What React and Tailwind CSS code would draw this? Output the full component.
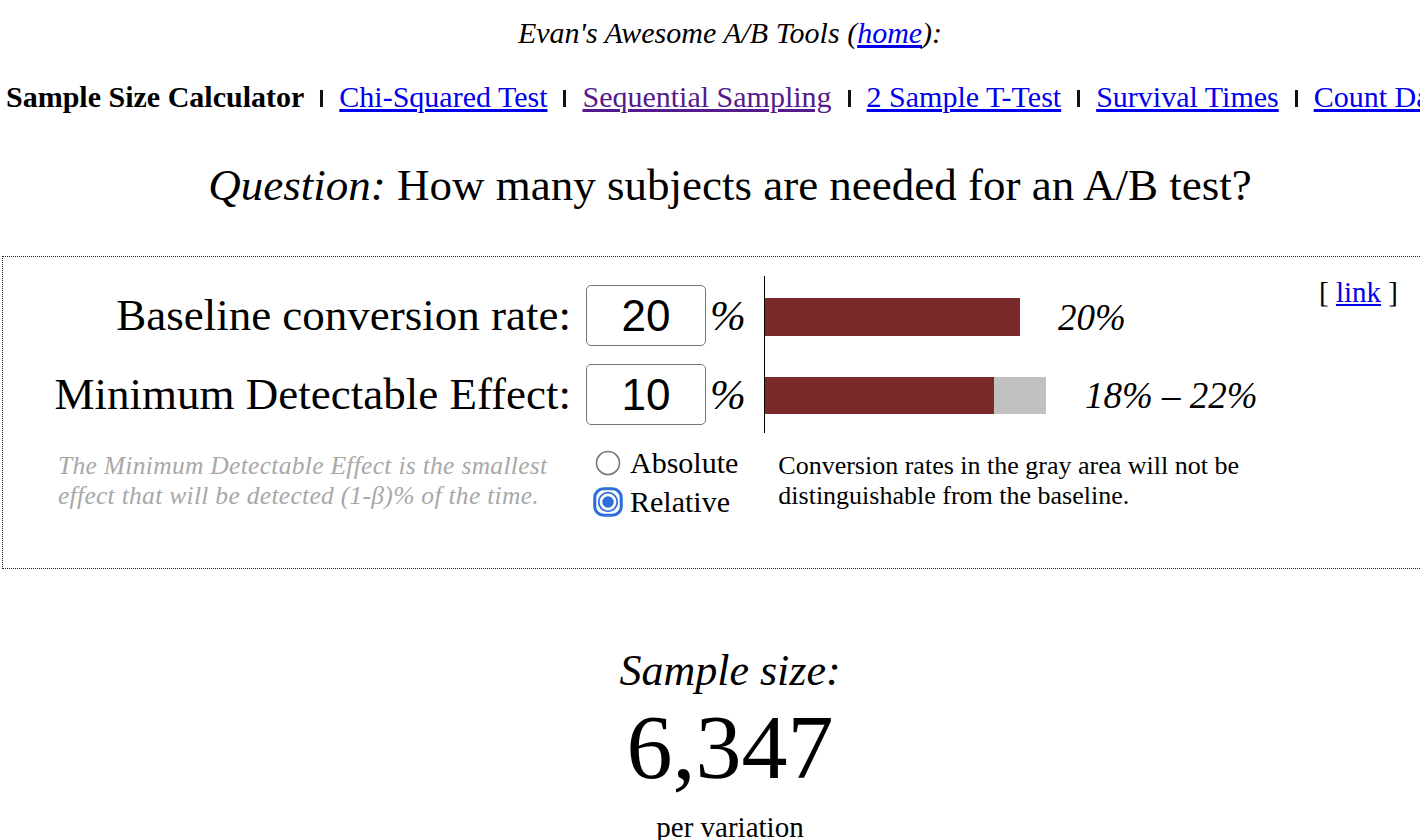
import React from "react";

function Sep() {
  return <span className="inline-block mx-[16px] w-[3px] h-[17px] bg-[#111] align-[0px]" />;
}

export default function App() {
  return (
    <div className="w-[1420px] h-[840px] overflow-hidden bg-white text-black font-['Liberation_Serif',serif]">
      <div className="w-[1460px]">
        <div className="pt-[15px] text-center italic text-[30px] leading-[36px]">
          Evan's Awesome A/B Tools (<a className="text-[#0000ee] underline" href="#">home</a>):
        </div>
        <div className="mt-[28px] pl-[6px] whitespace-nowrap text-[30px] leading-[36px]">
          <b>Sample Size Calculator</b>
          <Sep />
          <a className="text-[#0000ee] underline" href="#">Chi-Squared Test</a>
          <Sep />
          <a className="text-[#551a8b] underline" href="#">Sequential Sampling</a>
          <Sep />
          <a className="text-[#0000ee] underline" href="#">2 Sample T-Test</a>
          <Sep />
          <a className="text-[#0000ee] underline" href="#">Survival Times</a>
          <Sep />
          <a className="text-[#0000ee] underline" href="#">Count Data</a>
        </div>
        <div className="mt-[44px] text-center text-[45px] leading-[52px]">
          <i>Question:</i> How many subjects are needed for an A/B test?
        </div>

        <div className="mt-[45px] ml-[2px] w-[1456px] h-[313px] border border-dotted border-[#222]">
          <div className="flex">
            <div className="w-[742px] pt-[28px] flex flex-col gap-[18px]">
              {[
                ["Baseline conversion rate:", "20"],
                ["Minimum Detectable Effect:", "10"],
              ].map(([label, val]) => (
                <div key={label} className="flex items-center justify-end h-[61px]">
                  <span className="text-[45px] leading-none">{label}</span>
                  <div className="ml-[15px] w-[120px] h-[61px] border-[1.5px] border-[#767676] rounded-[5px] flex items-center justify-center font-['Liberation_Sans',sans-serif] text-[44px]">
                    {val}
                  </div>
                  <span className="ml-[4px] w-[35px] italic text-[43px] leading-none">%</span>
                </div>
              ))}
            </div>
            <div className="ml-[19px] mt-[19px] h-[157px] border-l border-black pt-[22px] w-[520px]">
              <div className="flex items-center h-[38px]">
                <div className="w-[255px] h-[38px] bg-[#7a2a29]" />
                <span className="ml-[38px] italic text-[37px] leading-none">20%</span>
              </div>
              <div className="flex items-center h-[37px] mt-[41px]">
                <div className="w-[229px] h-[37px] bg-[#7a2a29]" />
                <div className="w-[52px] h-[37px] bg-[#c0c0c0]" />
                <span className="ml-[39px] italic text-[37px] leading-none">18% – 22%</span>
              </div>
            </div>
            <div className="ml-[35px] pt-[18px] text-[29px] leading-[34px] whitespace-nowrap">
              [ <a className="text-[#0000ee] underline" href="#">link</a> ]
            </div>
          </div>

          <div className="flex mt-[18px]">
            <div className="ml-[55px] w-[520px] italic text-[#a8a8a8] text-[25.5px] leading-[30px] tracking-[0.3px]">
              The Minimum Detectable Effect is the smallest
              <br />
              effect that will be detected (1-β)% of the time.
            </div>
            <div className="ml-[15px] flex flex-col text-[30px] leading-[39px] -mt-[8px]">
              <label className="flex items-center">
                <span className="w-[30px] h-[30px] flex items-center justify-center">
                  <svg width="26" height="26" viewBox="0 0 26 26">
                    <circle cx="13" cy="13" r="11.5" fill="white" stroke="#767676" strokeWidth="1.6" />
                  </svg>
                </span>
                <span className="ml-[7px]">Absolute</span>
              </label>
              <label className="flex items-center">
                <span className="w-[30px] h-[30px] flex items-center justify-center">
                  <svg width="34" height="34" viewBox="0 0 34 34">
                    <rect x="2" y="2" width="30" height="30" rx="10" fill="white" stroke="#2f6fdc" strokeWidth="3.5" />
                    <circle cx="17" cy="17" r="10.5" fill="white" stroke="#2f6fdc" strokeWidth="2" />
                    <circle cx="17" cy="17" r="6.5" fill="#2f6fdc" />
                  </svg>
                </span>
                <span className="ml-[7px]">Relative</span>
              </label>
            </div>
            <div className="ml-[40px] text-[26px] leading-[30px]">
              Conversion rates in the gray area will not be
              <br />
              distinguishable from the baseline.
            </div>
          </div>
        </div>

        <div className="mt-[76px] text-center italic text-[44px] leading-[52px]">Sample size:</div>
        <div className="text-center text-[92px] leading-[100px]">6,347</div>
        <div className="mt-[13px] text-center text-[29px] leading-[34px]">per variation</div>
      </div>
    </div>
  );
}
